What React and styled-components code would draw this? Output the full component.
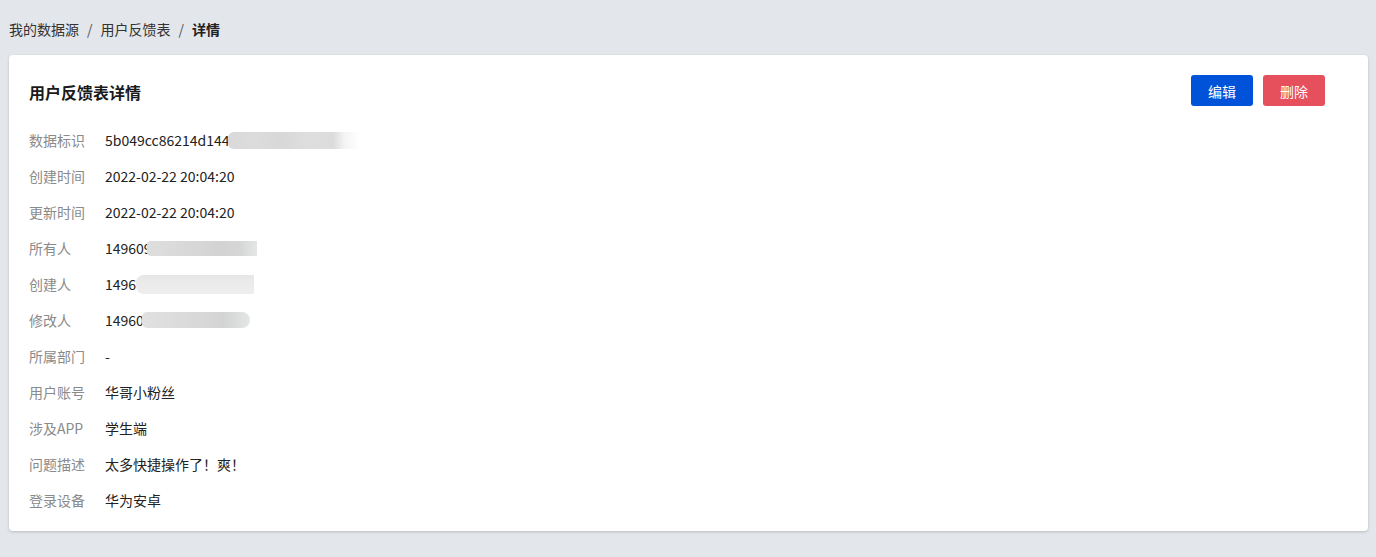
import styled, { createGlobalStyle } from "styled-components";

const GlobalStyle = createGlobalStyle`
	body {
		margin: 0;
		background: #e3e6eb;
		font-family: "Noto Sans CJK SC", "Noto Sans", sans-serif;
		font-size: 14px;
		color: #222;
	}
`;

const Page = styled.div`
	padding: 20px 8px 0 9px;
	min-height: 557px;
	box-sizing: border-box;
`;

const Breadcrumb = styled.nav`
	display: flex;
	align-items: center;
	height: 18px;
	line-height: 18px;
	margin-bottom: 17px;
	color: #333;
`;

const Crumb = styled.span`
	font-weight: ${(p) => (p.$current ? 700 : 400)};
	color: ${(p) => (p.$current ? "#222" : "#333")};
`;

const Sep = styled.span`
	margin: 0 8px;
	color: #555;
`;

const Card = styled.section`
	background: #fff;
	border-radius: 4px;
	box-shadow: 0 1px 3px rgba(0, 0, 0, 0.18);
	padding: 20px 43px 13px 20px;
`;

const Header = styled.div`
	display: flex;
	align-items: center;
	justify-content: space-between;
	height: 31px;
	margin-bottom: 16px;
`;

const Title = styled.h2`
	margin: 2px 0 0;
	font-size: 16px;
	font-weight: 700;
	color: #1a1a1a;
`;

const Actions = styled.div`
	display: flex;
	gap: 10px;
`;

const Button = styled.button`
	width: 62px;
	height: 31px;
	border: none;
	border-radius: 3px;
	background: ${(p) => (p.$danger ? "#e5505c" : "#0052d9")};
	color: #fff;
	font-family: inherit;
	font-size: 14px;
	cursor: pointer;
`;

const List = styled.div`
	display: flex;
	flex-direction: column;
`;

const Row = styled.div`
	display: flex;
	align-items: center;
	height: 36px;
`;

const Label = styled.span`
	width: 76px;
	flex-shrink: 0;
	color: #8a8a8a;
`;

const Value = styled.span`
	display: flex;
	align-items: center;
	color: #222;
`;

const Mosaic = styled.span`
	display: inline-block;
	width: ${(p) => p.$w}px;
	height: ${(p) => p.$h || 16}px;
	margin-left: ${(p) => p.$ml || 0}px;
	border-radius: ${(p) => p.$r || "0"};
	background: ${(p) => p.$bg};
`;

const greyA =
	"linear-gradient(90deg, #d9d9d9 0%, #dcdcdc 20%, #d8d8d8 40%, #dedede 60%, #dcdcdc 80%, #f4f4f4 88%, #fff 100%)";
const greyB =
	"linear-gradient(90deg, #dedede 0%, #dadada 25%, #d6d6d6 50%, #d3d3d3 65%, #d6d6d6 85%, #e4e6e6 100%)";
const greyC =
	"linear-gradient(180deg, #e6e6e6 0%, #ebebeb 45%, #eeeeee 100%)";
const greyD =
	"linear-gradient(90deg, #e1e1e1 0%, #dcdcdc 30%, #d8d8d8 55%, #d3d3d3 75%, #e4e6e6 100%)";

const rows = [
	{ label: "数据标识", text: "5b049cc86214d1440", mask: { w: 132, h: 17, bg: greyA, r: "6px 0 0 6px", ml: -9 } },
	{ label: "创建时间", text: "2022-02-22 20:04:20" },
	{ label: "更新时间", text: "2022-02-22 20:04:20" },
	{ label: "所有人", text: "149609", mask: { w: 110, h: 15, bg: greyB, r: "4px 0 0 4px", ml: -5 } },
	{ label: "创建人", text: "1496", mask: { w: 118, h: 19, bg: greyC, r: "8px 0 0 8px" } },
	{ label: "修改人", text: "14960", mask: { w: 108, h: 16, bg: greyD, r: "5px 8px 8px 5px", ml: -2 } },
	{ label: "所属部门", text: "-" },
	{ label: "用户账号", text: "华哥小粉丝" },
	{ label: "涉及APP", text: "学生端" },
	{ label: "问题描述", text: "太多快捷操作了！爽！" },
	{ label: "登录设备", text: "华为安卓" },
];

const App = () => {
	return (
		<>
			<GlobalStyle />
			<Page>
				<Breadcrumb>
					<Crumb>我的数据源</Crumb>
					<Sep>/</Sep>
					<Crumb>用户反馈表</Crumb>
					<Sep>/</Sep>
					<Crumb $current>详情</Crumb>
				</Breadcrumb>
				<Card>
					<Header>
						<Title>用户反馈表详情</Title>
						<Actions>
							<Button>编辑</Button>
							<Button $danger>删除</Button>
						</Actions>
					</Header>
					<List>
						{rows.map((row) => (
							<Row key={row.label}>
								<Label>{row.label}</Label>
								<Value>
									{row.text}
									{row.mask && (
										<Mosaic
											$w={row.mask.w}
											$h={row.mask.h}
											$bg={row.mask.bg}
											$r={row.mask.r}
											$ml={row.mask.ml}
										/>
									)}
								</Value>
							</Row>
						))}
					</List>
				</Card>
			</Page>
		</>
	);
};

export default App;
